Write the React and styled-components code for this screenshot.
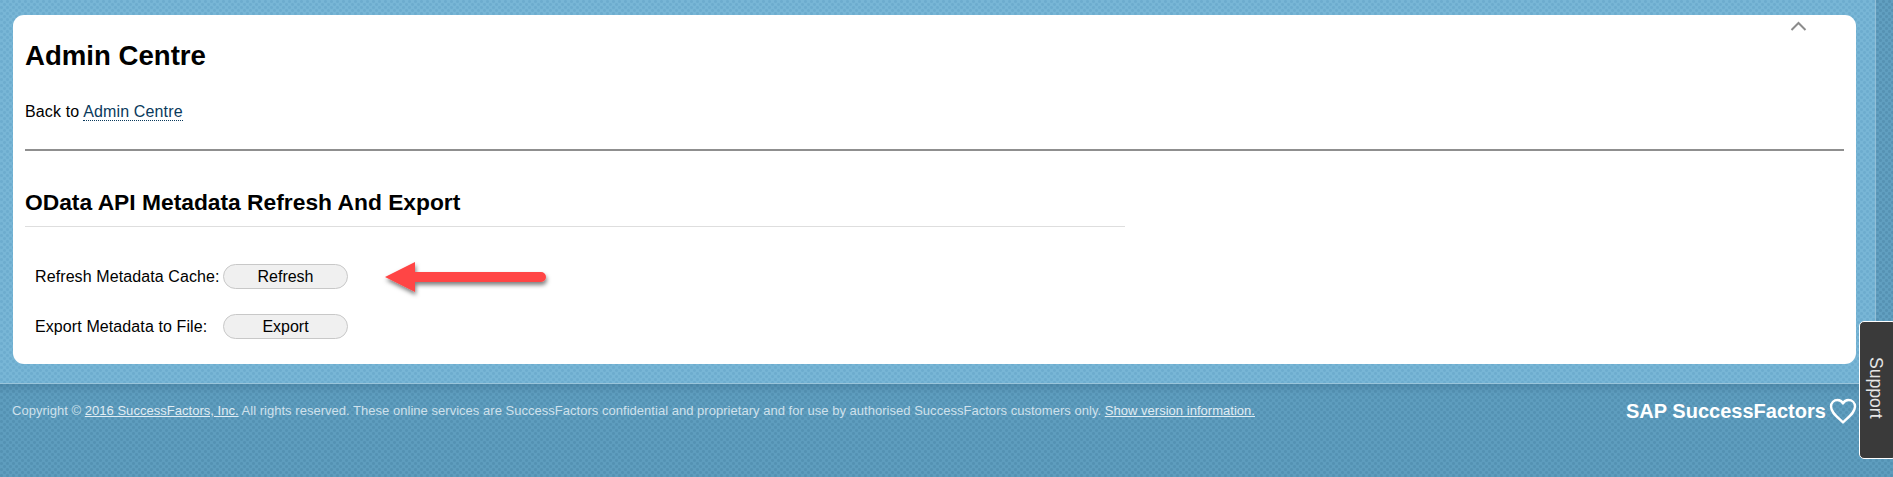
import React from "react";
import styled, { createGlobalStyle } from "styled-components";

const GlobalStyle = createGlobalStyle`
	html, body {
		margin: 0;
		padding: 0;
		height: 100%;
		overflow: hidden;
	}
	body {
		font-family: "Liberation Sans", Arial, sans-serif;
		background: #72b2d3;
	}
`;

const dots = (light, dark) => `
	background-color: ${light};
	background-image:
		radial-gradient(circle at 1.5px 1.5px, ${dark} 1px, transparent 2px),
		radial-gradient(circle at 4.5px 4.5px, ${dark} 1px, transparent 2px);
	background-size: 6px 6px;
`;

const Page = styled.div`
	position: relative;
	width: 1893px;
	height: 477px;
	overflow: hidden;
	display: flex;
	flex-direction: column;
`;

const Top = styled.div`
	display: flex;
	height: 383px;
	${dots("#78b6d6", "#6dacce")}
`;

const Content = styled.main`
	flex: 1;
	padding: 15px 19px 19px 13px;
	display: flex;
`;

const Rail = styled.div`
	width: 17px;
	border-left: 1px solid #93bfd6;
	${dots("#619fc0", "#5692b3")}
`;

const Card = styled.section`
	flex: 1;
	position: relative;
	background: #fff;
	border-radius: 11px;
	padding: 24px 12px 0 12px;
`;

const Collapse = styled.svg`
	position: absolute;
	top: 6px;
	right: 49px;
	width: 17px;
	height: 11px;
`;

const Title = styled.h1`
	margin: 0;
	font-size: 27.6px;
	line-height: 34px;
	font-weight: bold;
	color: #000;
`;

const Back = styled.p`
	margin: 27px 0 0;
	font-size: 16px;
	line-height: 24px;
	letter-spacing: 0.15px;
	color: #000;
`;

const BackLink = styled.a`
	color: #0a3a5c;
	border-bottom: 1px dotted #0a3a5c;
`;

const Rule = styled.hr`
	margin: 25px 0 0;
	border: 0;
	height: 2px;
	background: #8f8f8f;
`;

const Heading = styled.h2`
	margin: 38px 0 0;
	width: 1100px;
	padding-bottom: 10px;
	border-bottom: 1px solid #dedede;
	font-size: 22.8px;
	line-height: 27px;
	font-weight: bold;
	color: #000;
`;

const Form = styled.div`
	margin: 37px 0 0 10px;
	display: flex;
	flex-direction: column;
	gap: 25px;
`;

const Row = styled.div`
	display: flex;
	align-items: center;
	height: 25px;
`;

const Label = styled.label`
	flex: none;
	width: 188px;
	font-size: 16px;
	letter-spacing: 0.1px;
	color: #000;
	white-space: nowrap;
`;

const Button = styled.button`
	flex: none;
	width: 125px;
	height: 25px;
	padding: 0;
	border: 1px solid #c8c8c8;
	border-radius: 13px;
	background: #f0f0f0;
	font: 16px "Liberation Sans", Arial, sans-serif;
	color: #000;
`;

const Arrow = styled.svg`
	flex: none;
	margin-left: 34px;
	width: 176px;
	height: 44px;
`;

const Footer = styled.footer`
	flex: 1;
	position: relative;
	border-top: 1px solid #9ac5db;
	${dots("#5e9dbe", "#5492b3")}
	display: flex;
	align-items: flex-start;
	justify-content: space-between;
	padding: 18px 35px 0 12px;

	&::before {
		content: "";
		position: absolute;
		top: 0;
		left: 0;
		right: 0;
		height: 10px;
		background: linear-gradient(rgba(0, 30, 60, 0.12), transparent);
	}
`;

const Copyright = styled.p`
	margin: 0;
	font-size: 13px;
	line-height: 17px;
	letter-spacing: 0.026px;
	color: #cfe1ec;
	white-space: nowrap;
`;

const FooterLink = styled.a`
	color: #e0ecf3;
	text-decoration: underline;
`;

const Logo = styled.div`
	display: flex;
	align-items: center;
	gap: 3px;
	margin-top: -6px;
	color: #fff;
	font-size: 20px;
	line-height: 30px;
	letter-spacing: 0.02px;
	font-weight: bold;
	white-space: nowrap;
`;

const Heart = styled.svg`
	width: 28px;
	height: 27px;
	margin-right: 1px;
`;

const SupportTab = styled.div`
	position: absolute;
	top: 321px;
	right: -4px;
	width: 38px;
	height: 138px;
	box-sizing: border-box;
	background: #3a3a3a;
	border: 1px solid #fff;
	border-radius: 5px;
	color: #e6e6e6;
	font-size: 17.6px;
	writing-mode: vertical-rl;
	display: flex;
	align-items: center;
	padding-top: 35px;
	padding-right: 5px;
`;

export default function App() {
	return (
		<Page>
			<GlobalStyle />
			<Top>
				<Content>
					<Card>
						<Collapse viewBox="0 0 17 11">
							<path d="M1.5 9 L8.5 2 L15.5 9" fill="none" stroke="#8c8c8c" strokeWidth="2" />
						</Collapse>
						<Title>Admin Centre</Title>
						<Back>
							Back to <BackLink>Admin Centre</BackLink>
						</Back>
						<Rule />
						<Heading>OData API Metadata Refresh And Export</Heading>
						<Form>
							<Row>
								<Label>Refresh Metadata Cache:</Label>
								<Button>Refresh</Button>
								<Arrow viewBox="0 0 176 44">
									<defs>
										<filter id="arrowShadow" x="-10%" y="-30%" width="125%" height="180%">
											<feDropShadow dx="1" dy="3" stdDeviation="2.2" floodColor="#000" floodOpacity="0.5" />
										</filter>
									</defs>
									<path
										d="M3 22 L33 7 L33 17 L159 17 A5 5 0 0 1 159 27 L33 27 L33 37 Z"
										fill="#ff4444"
										filter="url(#arrowShadow)"
									/>
								</Arrow>
							</Row>
							<Row>
								<Label>Export Metadata to File:</Label>
								<Button>Export</Button>
							</Row>
						</Form>
					</Card>
				</Content>
				<Rail />
			</Top>
			<Footer>
				<Copyright>
					Copyright © <FooterLink>2016 SuccessFactors, Inc.</FooterLink> All rights reserved. These online services are SuccessFactors confidential and proprietary and for use by authorised SuccessFactors customers only. <FooterLink>Show version information.</FooterLink>
				</Copyright>
				<Logo>
					SAP SuccessFactors
					<Heart viewBox="0 0 28 27">
						<path
							d="M14 24.5 C8 18.5 2 14.5 2 8.5 C2 4.5 5 2 8.5 2 C11 2 13 3.5 14 5.5 C15 3.5 17 2 19.5 2 C23 2 26 4.5 26 8.5 C26 14.5 20 18.5 14 24.5 Z"
							fill="none"
							stroke="#fff"
							strokeWidth="2.4"
							strokeLinejoin="round"
						/>
					</Heart>
				</Logo>
			</Footer>
			<SupportTab>Support</SupportTab>
		</Page>
	);
}
